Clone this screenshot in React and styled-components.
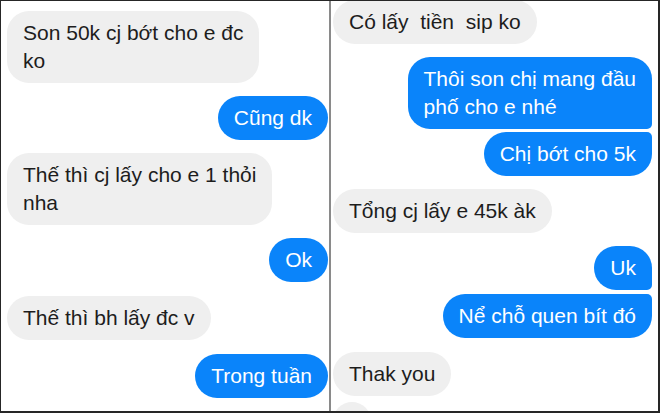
import React from 'react';
import styled, { createGlobalStyle, css } from 'styled-components';

const GlobalStyle = createGlobalStyle`
  html, body {
    margin: 0;
    padding: 0;
    background: #ffffff;
  }
  body {
    font-family: "Liberation Sans", Arial, sans-serif;
  }
`;

const Frame = styled.div`
  width: 660px;
  height: 413px;
  box-sizing: border-box;
  border-style: solid;
  border-color: #262626;
  border-width: 1px 2px 2px 1px;
  background: #ffffff;
  display: grid;
  grid-template-columns: 328px 2px 1fr;
  overflow: hidden;
`;

const Divider = styled.div`
  background: #8a8a8a;
`;

const Column = styled.div`
  display: flex;
  flex-direction: column;
  padding: ${p => p.$pad};
  min-width: 0;
`;

// Messenger-style bubble; side = in / out, corners for grouped messages
const Bubble = styled.div`
  box-sizing: border-box;
  align-self: ${p => (p.$out ? 'flex-end' : 'flex-start')};
  margin-top: ${p => p.$gap}px;
  padding: 8px 16px;
  font-size: 21px;
  line-height: 28px;
  white-space: pre-wrap;
  border-radius: 22px;
  background: ${p => (p.$out ? '#0a84fa' : '#efefef')};
  color: ${p => (p.$out ? '#ffffff' : '#1d1d1d')};
  ${p => p.$first && css`border-bottom-right-radius: 5px;`}
  ${p => p.$last && css`border-top-right-radius: 5px;`}
`;

const left = [
  { text: 'Son 50k cj bớt cho e đc\nko', gap: 10 },
  { text: 'Cũng dk', out: true, gap: 13 },
  { text: 'Thế thì cj lấy cho e 1 thỏi\nnha', gap: 13 },
  { text: 'Ok', out: true, gap: 13 },
  { text: 'Thế thì bh lấy đc v', gap: 14 },
  { text: 'Trong tuần', out: true, gap: 14 },
];

const right = [
  { text: 'Có lấy  tiền  sip ko', gap: -1 },
  { text: 'Thôi son chị mang đầu\nphố cho e nhé', out: true, gap: 13, first: true },
  { text: 'Chị bớt cho 5k', out: true, gap: 3, last: true },
  { text: 'Tổng cj lấy e 45k àk', gap: 13 },
  { text: 'Uk', out: true, gap: 13, first: true },
  { text: 'Nể chỗ quen bít đó', out: true, gap: 4, last: true },
  { text: 'Thak you', gap: 14 },
  { text: ' ', gap: 6 },
];

function Thread({ items, pad }) {
  return (
    <Column $pad={pad}>
      {items.map((m, i) => (
        <Bubble key={i} $out={m.out} $gap={m.gap} $first={m.first} $last={m.last}>
          {m.text}
        </Bubble>
      ))}
    </Column>
  );
}

function App() {
  return (
    <>
      <GlobalStyle />
      <Frame>
        <Thread items={left} pad="0 1px 0 6px" />
        <Divider />
        <Thread items={right} pad="0 6px 0 2px" />
      </Frame>
    </>
  );
}

export default App;
